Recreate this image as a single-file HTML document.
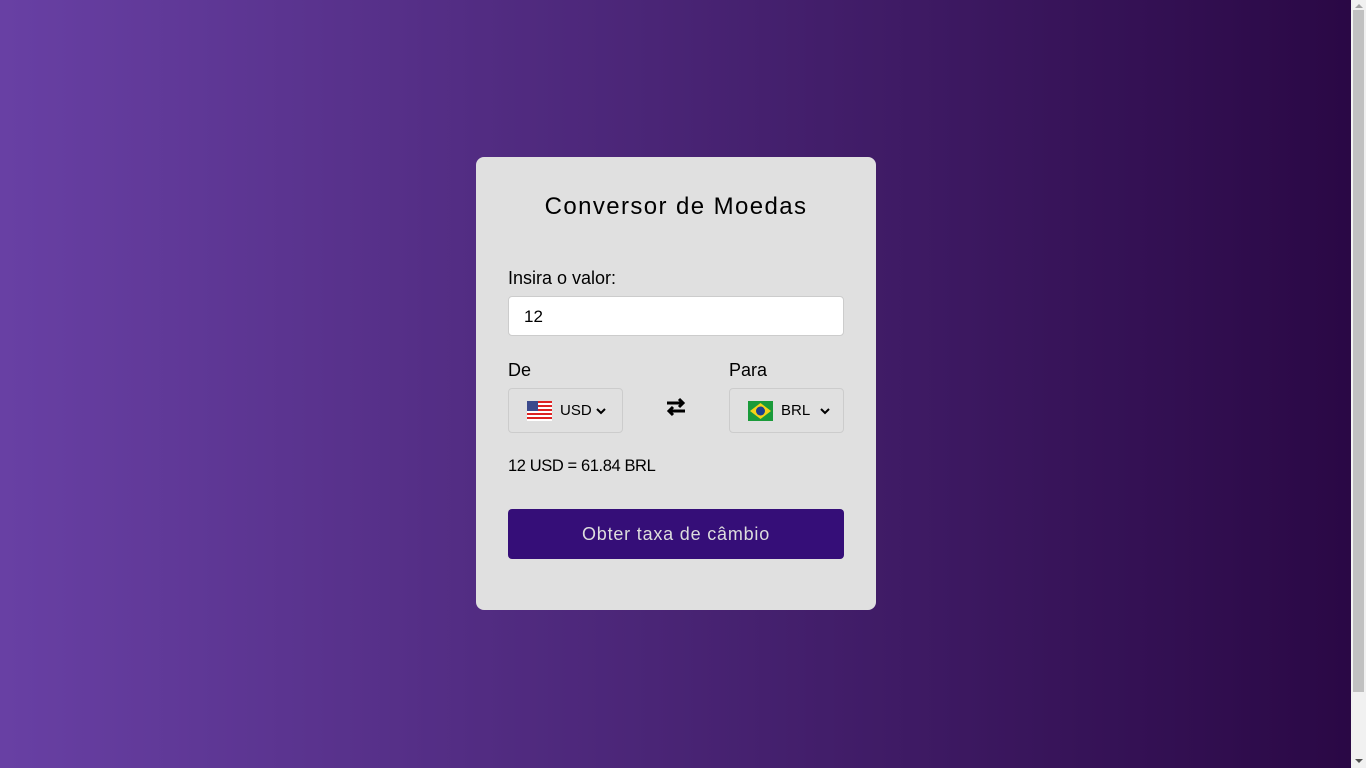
<!DOCTYPE html>
<html><head><meta charset="utf-8"><style>
*{box-sizing:border-box;margin:0;padding:0}
html,body{width:1366px;height:768px;overflow:hidden}
body{font-family:"Liberation Sans",sans-serif;background:#f1f1f1;position:relative}
.bg{position:absolute;left:0;top:0;width:1351px;height:768px;background:linear-gradient(to right,#6840a4,#2a0845)}
.sb{position:absolute;left:1351px;top:0;width:15px;height:768px;background:#f1f1f1}
.thumb{position:absolute;left:1353px;top:10px;width:11px;height:682px;background:#c1c1c1}
.up{position:absolute;left:1355px;top:4px;width:0;height:0;border-left:4px solid transparent;border-right:4px solid transparent;border-bottom:4px solid #a3a3a3}
.dn{position:absolute;left:1355px;top:759px;width:0;height:0;border-left:4px solid transparent;border-right:4px solid transparent;border-top:4px solid #505050}
.card{position:absolute;left:476px;top:157px;width:400px;height:453px;background:#e0e0e0;border-radius:8px;color:#000}
h1{position:absolute;top:36px;left:0;width:400px;text-align:center;font-size:24px;font-weight:normal;letter-spacing:1.4px}
.lbl{position:absolute;font-size:18px}
.inp{position:absolute;left:32px;top:139px;width:336px;height:40px;background:#fff;border:1px solid #ccc;border-radius:4px;font-size:17px;padding:10px 15px}
.sel{position:absolute;top:231px;width:115px;height:45px;border:1px solid #ccc;border-radius:4px;font-size:15px;display:flex;align-items:center}
.res{position:absolute;left:32px;top:300px;font-size:16.5px;letter-spacing:-0.4px}
.btn{position:absolute;left:32px;top:352px;width:336px;height:50px;background:#350e78;border-radius:4px;color:#ddd;font-size:18px;text-align:center;line-height:50px;letter-spacing:0.8px}
</style></head><body>
<div class="bg"></div>
<div class="sb"></div><div class="thumb"></div><div class="up"></div><div class="dn"></div>
<div class="card">
<h1>Conversor de Moedas</h1>
<div class="lbl" style="left:32px;top:111px">Insira o valor:</div>
<div class="inp">12</div>
<div class="lbl" style="left:32px;top:203px">De</div>
<div class="lbl" style="left:253px;top:203px">Para</div>
<div class="sel" style="left:32px">
<svg style="margin-left:18px" width="25" height="20" viewBox="0 0 25 20"><rect width="25" height="20" fill="#fff"/><g fill="#d22"><rect y="0" width="25" height="2"/><rect y="4" width="25" height="2"/><rect y="8" width="25" height="2"/><rect y="12" width="25" height="2"/><rect y="16" width="25" height="2"/></g><rect width="11" height="10" fill="#3b4a8c"/></svg>
<span style="margin-left:8px">USD</span><svg style="margin-left:4px" width="10" height="8" viewBox="0 0 10 8"><path d="M1 2l4 4 4-4" stroke="#000" stroke-width="2" fill="none"/></svg></div>
<svg style="position:absolute;left:189px;top:239px" width="22" height="22" viewBox="0 0 22 22"><path d="M2 7h16M14 3l4 4-4 4M20 15H4M8 11l-4 4 4 4" stroke="#000" stroke-width="3" fill="none"/></svg>
<div class="sel" style="left:253px">
<svg style="margin-left:18px" width="25" height="20" viewBox="0 0 25 20"><rect width="25" height="20" fill="#1a9b3a"/><path d="M12.5 2L23 10 12.5 18 2 10z" fill="#f5d218"/><circle cx="12.5" cy="10" r="4.5" fill="#1e3f8f"/></svg>
<span style="margin-left:8px">BRL</span><svg style="margin-left:10px" width="10" height="8" viewBox="0 0 10 8"><path d="M1 2l4 4 4-4" stroke="#000" stroke-width="2" fill="none"/></svg></div>
<div class="res">12 USD = 61.84 BRL</div>
<div class="btn">Obter taxa de câmbio</div>
</div>
</body></html>
